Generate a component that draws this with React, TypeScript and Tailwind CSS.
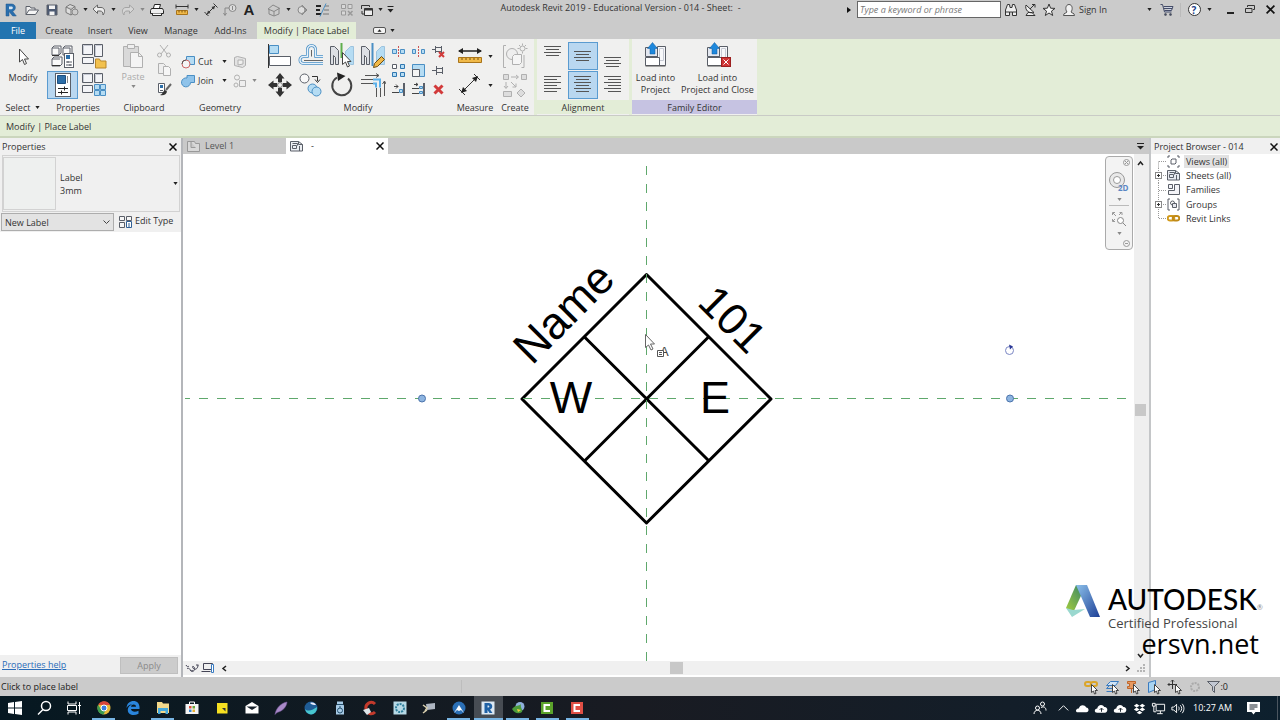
import type { ReactNode } from "react"

const BLUE = "#4a8fc4"
const PALE = "#b5dcf3"
const INK = "#5a5f68"
const FADE = "#b0b0b0"

type IconProps = { w?: number; h?: number; children: ReactNode }

function Icon({ w = 16, h = 16, children }: IconProps) {
  return (
    <svg width={w} height={h} viewBox={`0 0 ${w} ${h}`} fill="none" stroke={INK} strokeWidth="1" className="shrink-0">
      {children}
    </svg>
  )
}

function Caret({ faded = false, small = false }: { faded?: boolean; small?: boolean }) {
  return (
    <svg width={small ? 5 : 7} height={small ? 3 : 4} viewBox="0 0 7 4" className="shrink-0">
      <path d="M0.500 0h6L3.500 4z" fill={faded ? "#888" : "#222"} />
    </svg>
  )
}

function CloseX({ size = 8 }: { size?: number }) {
  return (
    <svg width={size} height={size} viewBox="0 0 8 8" stroke="#111" strokeWidth="1.500">
      <path d="M0.500 0.500l7 7M7.500 0.500l-7 7" />
    </svg>
  )
}

/* ---------- title bar ---------- */

const QUICK: { name: string; width: string; icon: ReactNode }[] = [
  {
    name: "Revit",
    width: "w-[22px]",
    icon: (
      <Icon>
        <path d="M3 2h5.500c5 0 5 6.500 1 7.200l3.800 4.800h-3.600L6 9.500V14H3z" fill="#2a6fae" stroke="#1d568c" strokeWidth="0.500" />
        <path d="M6 4.500h2.500c1.800 0 1.800 2.700 0 2.700H6z" fill="#d5e6f3" stroke="none" />
      </Icon>
    ),
  },
  {
    name: "Open",
    width: "w-5",
    icon: (
      <Icon>
        <path d="M2 12.500V4.500h4l1 1.500h4v2" fill="#eee" />
        <path d="M2 12.500l3-4.500h9.500l-3 4.500z" fill="#f5f5f5" />
      </Icon>
    ),
  },
  {
    name: "Save",
    width: "w-5",
    icon: (
      <Icon>
        <path d="M3 3h10v10H3z" fill="#4d5a72" />
        <path d="M5 3.500h6v3.500H5zM5.500 9.500h5V13h-5z" fill="#f4f4f4" stroke="none" />
      </Icon>
    ),
  },
  {
    name: "Synchronize",
    width: "w-[19px]",
    icon: (
      <Icon>
        <path d="M2 5l4-2.500 5 2v5.500l-4 3-5-2.500zM2 5l5 2.500 4-3M7 7.500V13" fill="#ddd" stroke="#777" />
        <circle cx="11" cy="10" r="3" fill="#ccc" stroke="#888" />
      </Icon>
    ),
  },
  { name: "Synchronize options", width: "w-2", icon: <Caret small /> },
  {
    name: "Undo",
    width: "w-5",
    icon: (
      <Icon>
        <path d="M2 7l4.500-4v2.500h3.500c4 0 4.500 4.500 2 7.500 0-3-1-4-3-4H6.500v2.500z" fill="#eee" stroke="#666" />
      </Icon>
    ),
  },
  { name: "Undo history", width: "w-[9px]", icon: <Caret small /> },
  {
    name: "Redo",
    width: "w-5",
    icon: (
      <Icon>
        <path d="M14 7L9.500 3v2.500H6c-4 0-4.500 4.500-2 7.500 0-3 1-4 3-4h2.500v2.500z" fill="#d6d6d6" stroke="#a4a4a4" />
      </Icon>
    ),
  },
  { name: "Redo history", width: "w-[9px]", icon: <Caret small faded /> },
  {
    name: "Print",
    width: "w-5",
    icon: (
      <Icon>
        <path d="M4.500 6L5.500 2.500h6l-1 3.500" fill="#fff" stroke="#222" />
        <path d="M2.500 6.500h11l1 2v3h-13v-3z" fill="#eee" stroke="#222" />
        <path d="M3.500 11.500v2h9v-2" fill="#fff" stroke="#222" />
      </Icon>
    ),
  },
  {
    name: "Measure",
    width: "w-[25px] pl-[5px]",
    icon: (
      <Icon>
        <path d="M2 4.500h12M2 2.500v4M14 2.500v4" stroke="#333" />
        <path d="M2.500 8.500h11v4h-11z" fill="#f0b948" stroke="#a9741a" />
        <path d="M5 8.500v2M8 8.500v2M11 8.500v2" stroke="#7a5210" />
      </Icon>
    ),
  },
  { name: "Measure options", width: "w-[9px]", icon: <Caret small /> },
  {
    name: "Aligned Dimension",
    width: "w-[19px]",
    icon: (
      <Icon>
        <path d="M3 13L13 3M1.500 10l4 4M10.500 1.500l4 4" stroke="#333" />
        <path d="M4 12l1-3.500L7.500 11zM12 4l-1 3.500L8.500 5z" fill="#333" stroke="none" />
      </Icon>
    ),
  },
  {
    name: "Tag by Category",
    width: "w-[19px]",
    icon: (
      <Icon>
        <circle cx="10.500" cy="6" r="3.500" stroke="#888" fill="#ddd" />
        <path d="M10.500 4v4M7 6H3v7M1.500 11L3 13.500 4.500 11" stroke="#888" />
      </Icon>
    ),
  },
  {
    name: "Text",
    width: "w-5",
    icon: <span className="font-['Liberation_Sans',Arial,sans-serif] text-[15px] leading-none font-bold text-[#222]">A</span>,
  },
  {
    name: "Default 3D View",
    width: "w-[25px] pl-[5px]",
    icon: (
      <Icon>
        <path d="M2 7l5-4 6 3v6l-5 2-5-2V7M2 7l6 2.500L14 6M8 9.500V14" fill="#ccc" stroke="#888" />
      </Icon>
    ),
  },
  { name: "3D View options", width: "w-2", icon: <Caret small /> },
  {
    name: "Section",
    width: "w-5",
    icon: (
      <Icon>
        <path d="M8 3l5 5-5 5z" fill="#999" stroke="#888" />
        <circle cx="7.500" cy="8" r="3.500" fill="#ddd" stroke="#888" />
      </Icon>
    ),
  },
  {
    name: "Thin Lines",
    width: "w-[19px]",
    icon: (
      <Icon>
        <path d="M2 4h5M2 8h4M2 12h5" stroke="#222" strokeWidth="2" />
        <path d="M11 4h4M10 8h5M9 12h6" stroke="#777" />
        <path d="M12 1.500L6 14.500" stroke={BLUE} />
      </Icon>
    ),
  },
  {
    name: "Close Inactive Views",
    width: "w-[26px] pl-[6px]",
    icon: (
      <Icon>
        <path d="M2.500 2.500h4v4h-4zM9 2.500h4v4H9zM2.500 9h4v4h-4z" fill="#d8d8d8" stroke="#999" />
        <path d="M9 9l4.500 4.500M13.500 9L9 13.500" stroke="#999" strokeWidth="1.500" />
      </Icon>
    ),
  },
  {
    name: "Switch Windows",
    width: "w-5",
    icon: (
      <Icon>
        <path d="M2.500 7V3.500h8V5" stroke="#333" />
        <path d="M5.500 6.500h8v7h-8z" fill="#eee" stroke="#333" />
        <path d="M5.500 7.500h8" stroke="#333" strokeWidth="2" />
        <path d="M3 9v3h2" stroke="#333" />
      </Icon>
    ),
  },
  { name: "Window list", width: "w-[6px]", icon: <Caret small /> },
  {
    name: "Customize Quick Access Toolbar",
    width: "w-[15px]",
    icon: (
      <Icon w={7} h={7}>
        <path d="M0.500 0.500h6" stroke="#222" />
        <path d="M0.500 3h6l-3 3.500z" fill="#222" stroke="none" />
      </Icon>
    ),
  },
]

function TitleBar() {
  return (
    <header className="flex h-[22px] items-center bg-[#cbcbcb] pb-[3px]">
      <div className="flex h-full shrink-0 items-center">
        {QUICK.map((q) => (
          <button key={q.name} aria-label={q.name} className={`${q.width} flex h-full items-center justify-center`}>
            {q.icon}
          </button>
        ))}
      </div>
      <h1 className="min-w-0 flex-1 truncate pr-1 pb-[3px] text-center text-[9px] whitespace-pre text-[#333]">
        Autodesk Revit 2019 - Educational Version - 014 - Sheet:  -
      </h1>
      <div className="flex h-full shrink-0 items-center">
        <button aria-label="Collapse search" className="w-[10px]">
          <svg width="4" height="6" viewBox="0 0 4 6">
            <path d="M0 0l4 3-4 3z" fill="#111" />
          </svg>
        </button>
        <input
          aria-label="Search"
          placeholder="Type a keyword or phrase"
          className="h-[17px] w-36 border border-[#666] bg-white px-[2px] text-[9px] italic placeholder:text-[#777]"
        />
        <button aria-label="Find" className="flex w-[19px] justify-center">
          <Icon w={14} h={14}>
            <path d="M1.500 12.500V7l2-5.500h2l.5 3h2l.5-3h2l2 5.500v5.500h-4V9H5.500v3.500zM1.500 9h4M8.500 9h4" fill="#eee" stroke="#333" />
          </Icon>
        </button>
        <button aria-label="Communication Center" className="flex w-[19px] justify-center">
          <Icon w={14} h={14}>
            <path d="M3 2c-1.500 5 3 9 8 7.500zM3 12.500h9l-3-3H5z" fill="#eee" stroke="#333" />
            <path d="M7 6l4-4M9 1.500h3v3" stroke="#333" />
          </Icon>
        </button>
        <button aria-label="Favorites" className="flex w-[19px] justify-center">
          <Icon w={14} h={14}>
            <path d="M7 1l1.600 4.200 4.400.2-3.500 2.700 1.200 4.400L7 10l-3.700 2.500 1.200-4.400L1 5.400l4.400-.2z" fill="#f5f5f5" stroke="#333" />
          </Icon>
        </button>
        <button className="flex w-[86px] items-center gap-[3px] pl-1 text-[9px] text-[#333]">
          <Icon w={14} h={14}>
            <path d="M1.500 12.500c0-3 3-2 3.500-3.500C3 6.500 3.500 1.500 7 1.500s4 5 2 7.500c.5 1.500 3.500.5 3.500 3.500z" fill="#f2f2f2" stroke="#555" />
          </Icon>
          Sign In
        </button>
        <button aria-label="Account menu" className="flex w-[10px] justify-center">
          <Caret small />
        </button>
        <button aria-label="App Store" className="flex w-[27px] justify-center border-r border-[#bbb]">
          <Icon w={14} h={14}>
            <path d="M0.500 1.500h2l2 7.500h7M3.500 3.500h9.500l-1.500 4H4.500M4 5.500h8" fill="#cdd3e2" stroke="#444c68" />
            <circle cx="5.500" cy="11.500" r="1" fill="#444c68" />
            <circle cx="10.500" cy="11.500" r="1" fill="#444c68" />
          </Icon>
        </button>
        <button aria-label="Help" className="flex w-[26px] justify-center">
          <span className="flex size-[13px] items-center justify-center rounded-full border border-[#333] bg-white text-[10px] leading-none font-bold text-[#1d3f8c]">
            ?
          </span>
        </button>
        <button aria-label="Help menu" className="flex w-[10px]">
          <Caret small />
        </button>
        <button aria-label="Minimize" className="ml-[3px] flex w-5 justify-center pt-[7px]">
          <span className="h-[2px] w-[7px] bg-[#222]" />
        </button>
        <button aria-label="Restore" className="flex w-5 justify-center">
          <Icon w={10} h={9}>
            <path d="M2.500 2V0.500h7v4H8" stroke="#333" />
            <path d="M0.500 3.500h6.500v4H0.500z" stroke="#333" />
          </Icon>
        </button>
        <button aria-label="Close" className="flex w-5 justify-center">
          <CloseX size={9} />
        </button>
      </div>
    </header>
  )
}

const TABS = [
  { name: "Create", width: "w-[46px]" },
  { name: "Insert", width: "w-9" },
  { name: "View", width: "w-10" },
  { name: "Manage", width: "w-[46px]" },
  { name: "Add-Ins", width: "w-[53px]" },
]

function RibbonTabs() {
  return (
    <nav className="flex h-[17px] items-center bg-[#cbcbcb] text-[9px] text-[#333]">
      <button className="h-full w-9 bg-[#2274b0] text-white">File</button>
      {TABS.map((t) => (
        <button key={t.name} className={`${t.width} h-full whitespace-nowrap`}>
          {t.name}
        </button>
      ))}
      <button className="h-full w-[99px] bg-[#e3edd7] whitespace-nowrap">Modify | Place Label</button>
      <button aria-label="Ribbon display" className="ml-[17px] flex items-center gap-1">
        <Icon w={13} h={7}>
          <rect x="0.500" y="0.500" width="12" height="6" rx="1.500" fill="#f4f4f4" stroke="#555" />
          <path d="M4.500 4.800h4l-2-2.500z" fill="#222" stroke="none" />
        </Icon>
        <Caret small />
      </button>
    </nav>
  )
}

/* ---------- ribbon ---------- */

type PanelProps = { title: string; width: string; labelClass?: string; children: ReactNode }

function Panel({ title, width, labelClass = "", children }: PanelProps) {
  return (
    <section className={`${width} flex shrink-0 flex-col bg-[#f0f0ef] text-[#333]`}>
      <div className="flex h-[61px] justify-center pt-[3px]">{children}</div>
      <h2 className={`${labelClass} flex h-[14px] items-center justify-center text-[9px] leading-none`}>{title}</h2>
    </section>
  )
}

function Tool({ name, on = false, children }: { name: string; on?: boolean; children: ReactNode }) {
  return (
    <button
      aria-label={name}
      className={`flex h-7 items-center justify-center ${on ? "border border-[#5a9bd0] bg-[#b9d7f0]" : ""}`}
    >
      {children}
    </button>
  )
}

function LinesIcon({ rows, side }: { rows: number[]; side: "left" | "mid" | "right" }) {
  // alternating long and short strokes, as on a paragraph button
  return (
    <Icon w={18} h={22}>
      {rows.map((y, i) => {
        const len = i % 2 ? 13 : 17
        const x = side === "left" ? 0 : side === "right" ? 17 - len : (17 - len) / 2
        return <path key={y} d={`M${x} ${y}.500h${len}`} stroke="#555" />
      })}
    </Icon>
  )
}

function PropertiesPanel() {
  return (
    <Panel title="Properties" width="w-16">
      <div className="grid grid-cols-[31px_31px] content-start gap-y-px">
        <Tool name="Family Category and Parameters">
          <Icon w={26} h={26}>
            <path d="M2 5l2-2h7v7l-2 2H2zM13 5l2-2h7v7l-2 2h-7zM2 16l2-2h8v7l-2 2H2zM2 5h7v7M13 5h7v7M2 16h8" fill="#fafafa" />
            <path d="M2 12.500h7M2 22.500h8" stroke="#333" />
            <rect x="14.500" y="10.500" width="9" height="14" fill="#fff" />
            <path d="M16 12h4v4h-4z" fill="#2c6ea8" stroke="none" />
            <path d="M16 19h6M16 22h6M18 18v2M20 21v2" />
          </Icon>
        </Tool>
        <Tool name="Family Types">
          <Icon w={26} h={26}>
            <path d="M1.500 1.500h10v10h-10zM13.500 1.500h8v12h-8zM1.500 14.500h11v6h-11z" fill="#f3f4f7" />
            <path d="M2.500 11v-8.500h8M14.500 13v-10.500h6" stroke="#c6cad4" />
            <path d="M14.500 16h4l1 2h5.500v7H14.500z" fill="#f2c14e" stroke="#b8862a" />
          </Icon>
        </Tool>
        <Tool name="Properties" on>
          <Icon w={26} h={26}>
            <rect x="5.500" y="1.500" width="15" height="23" fill="#fff" />
            <path d="M7.500 3.500h8v8h-8z" fill="#2c6ea8" stroke="#1d4f80" />
            <path d="M17.500 4v7" stroke="#888" />
            <path d="M8 16.500h10M8 20.500h10M14.500 14.500v4M11.500 18.500v4" stroke="#222" />
          </Icon>
        </Tool>
        <Tool name="Type Properties">
          <Icon w={26} h={26}>
            <path d="M1.500 1.500h10v9h-10zM13.500 1.500h8v9h-8zM1.500 13.500h10v7h-10z" fill="#f3f4f7" />
            <path d="M2.500 10v-7.500h8M14.500 10v-7.500h6" stroke="#c6cad4" />
            <path d="M13.500 12.500h5v5h-5zM19.500 12.500h5v5h-5zM13.500 18.500h5v5h-5zM19.500 18.500h5v5h-5z" fill={PALE} stroke={BLUE} />
          </Icon>
        </Tool>
      </div>
    </Panel>
  )
}

function ClipboardPanel() {
  return (
    <Panel title="Clipboard" width="w-[68px]">
      <button disabled className="flex w-[46px] flex-col items-center gap-[2px] pt-px text-[9px] leading-3 text-[#aaa]">
        <Icon w={22} h={26}>
          <path d="M1.500 3.500h15v20h-15z" fill="#d9d9d9" stroke={FADE} />
          <path d="M5.500 1.500h7v4h-7z" fill="#eee" stroke={FADE} />
          <path d="M8.500 9.500h8l4 4v11h-12zM16.500 9.500v4h4" fill="#f4f4f4" stroke={FADE} />
        </Icon>
        Paste
        <Caret small faded />
      </button>
      <div className="flex flex-col gap-[3px] pt-px pr-[6px]">
        <button aria-label="Cut to Clipboard" disabled>
          <Icon>
            <path d="M4 2l7 9M12 2L5 11" stroke={FADE} />
            <circle cx="3.500" cy="12" r="2" stroke={FADE} />
            <circle cx="12.500" cy="12" r="2" stroke={FADE} />
          </Icon>
        </button>
        <button aria-label="Copy to Clipboard" disabled>
          <Icon>
            <path d="M2.500 1.500h5l2 2v8h-7z" fill="#eee" stroke={FADE} />
            <path d="M7.500 4.500h5l2 2v7h-7z" fill="#f6f6f6" stroke={FADE} />
          </Icon>
        </button>
        <button aria-label="Match Type Properties">
          <Icon>
            <path d="M2.500 2.500h6v9h-6z" fill="#fff" />
            <path d="M4 4h3v3H4z" fill="#2c6ea8" stroke="none" />
            <path d="M4 9.500h3" />
            <path d="M15 3l-5 6" stroke="#666" strokeWidth="2" />
            <path d="M9 9c-2 1-2 4-5 5 4 1 6.500-1 7-3.500z" fill="#333" stroke="none" />
          </Icon>
        </button>
      </div>
    </Panel>
  )
}

function GeometryPanel() {
  return (
    <Panel title="Geometry" width="w-[84px]">
      <div className="flex w-full flex-col pt-[10px] pl-[3px] text-[9px]">
        <div className="flex h-[19px] items-center">
          <button className="flex w-[52px] items-center gap-[3px]">
            <Icon w={14} h={14}>
              <path d="M5.500 1.500h8v8h-8z" fill={PALE} stroke={BLUE} />
              <circle cx="5" cy="9" r="4" fill="#f4f4f4" stroke="#c66" />
              <path d="M5 5a4 4 0 0 0-4 4" stroke="#555" />
            </Icon>
            <span className="w-[21px] text-left">Cut</span>
            <Caret small />
          </button>
          <button aria-label="Cope" disabled>
            <Icon w={14} h={14}>
              <path d="M1.500 2.500l3-1 8 2v7l-3 2-8-2zM5 5v5l5-1V5z" fill="#e3e3e3" stroke={FADE} />
            </Icon>
          </button>
        </div>
        <div className="flex h-[19px] items-center">
          <button className="flex w-[52px] items-center gap-[3px]">
            <Icon w={14} h={14}>
              <path d="M6 1.500h7.500v7H9.500a4.500 4.500 0 1 1-3.500-4.500z" fill="#8fc3ea" stroke={BLUE} />
            </Icon>
            <span className="w-[21px] text-left">Join</span>
            <Caret small />
          </button>
          <button aria-label="Split Face" disabled className="flex items-center gap-[5px]">
            <Icon w={14} h={14}>
              <circle cx="4" cy="3.500" r="2.500" stroke={FADE} />
              <path d="M6.500 6.500h6v6h-6z" fill="#eee" stroke={FADE} />
              <circle cx="3" cy="11" r="2" stroke={FADE} />
            </Icon>
            <Caret small faded />
          </button>
        </div>
      </div>
    </Panel>
  )
}

const MODIFY_BIG: { name: string; icon: ReactNode }[] = [
  {
    name: "Align",
    icon: (
      <>
        <path d="M1.500 1v24" stroke="#333" />
        <path d="M2.500 2.500h9v8h-9z" fill={PALE} stroke={BLUE} />
        <path d="M2.500 13.500h21v9h-21z" fill="#fff" />
      </>
    ),
  },
  {
    name: "Offset",
    icon: (
      <>
        <path d="M1 21.500v-5h6.500v-2C2 8 7 1.500 13 1.500S23 8 18.500 13H25" stroke={BLUE} strokeWidth="0" />
        <path
          d="M25 20.500H5.500a3 3 0 0 1 0-7H9.500V6.500a4 4 0 0 1 8 0v7H25"
          stroke={BLUE}
          strokeWidth="3"
          strokeLinejoin="round"
        />
        <path
          d="M25 20.500H5.500a3 3 0 0 1 0-7H9.500V6.500a4 4 0 0 1 8 0v7H25"
          stroke="#e6f1fa"
          strokeWidth="1.500"
          strokeLinejoin="round"
        />
        <path d="M25 17.500H6M13.500 7v6.500" stroke="#666" />
      </>
    ),
  },
  {
    name: "Mirror - Pick Axis",
    icon: (
      <>
        <path d="M1.500 3.500h4l4 4v14h-3v-7l-2-2v9h-3z" fill="#dcdfe4" />
        <path d="M24.500 3.500h-3l-5 5v7l5 6h3z" fill={PALE} stroke="#9cc3de" />
        <path d="M12.500 0v15" stroke="#5fae4c" strokeWidth="2" />
        <path d="M13.500 9.500v12l3-2.500 2 5 2-1-2-4.500h3.500z" fill="#fff" stroke="#444" />
      </>
    ),
  },
  {
    name: "Mirror - Draw Axis",
    icon: (
      <>
        <path d="M1.500 3.500h4l4 4v14h-3v-7l-2-2v9h-3z" fill="#dcdfe4" />
        <path d="M24.500 3.500h-3l-5 5v13h8z" fill={PALE} stroke="#9cc3de" />
        <path d="M12.500 0v23" stroke={BLUE} strokeWidth="2" />
        <path d="M13.500 24.500l1-4 7-7 3 3-7 7z" fill="#f0b848" stroke="#6b4c12" />
      </>
    ),
  },
  {
    name: "Move",
    icon: (
      <>
        <path
          d="M13 1l4.500 5.500H15V10h-4V6.500H8.500zM13 25l4.500-5.500H15V16h-4v3.500H8.500zM1 13l5.500-4.500V11H10v4H6.500v2.500zM25 13l-5.500-4.500V11H16v4h3.500v2.500z"
          fill="#333"
          stroke="none"
        />
        <circle cx="13" cy="13" r="2.500" stroke="#777" />
      </>
    ),
  },
  {
    name: "Copy",
    icon: (
      <>
        <circle cx="6.500" cy="6.500" r="4.500" fill="#f8f8f8" />
        <circle cx="14.500" cy="16.500" r="4.500" fill={PALE} stroke={BLUE} />
        <circle cx="18.500" cy="19.500" r="4.500" fill={PALE} stroke={BLUE} />
        <path d="M14 4.500h5.500V9M17 7.500l2.500 3L22 7.500" stroke="#333" />
      </>
    ),
  },
  {
    name: "Rotate",
    icon: (
      <>
        <path d="M8 5.500a9.500 9.500 0 1 0 11 1" stroke="#444" strokeWidth="2" />
        <path d="M8 0.500l8.500 3.500L9 9z" fill="#222" stroke="none" />
      </>
    ),
  },
  {
    name: "Trim/Extend to Corner",
    icon: (
      <>
        <path d="M1 7.500h12M1 11.500h12M5 3.500h14M16 1.500l3 2-3 2" stroke="#555" />
        <path d="M13 7.500h7v8M13 11.500h3v4" stroke="#5ab0ea" strokeWidth="2" />
        <path d="M16.500 16v9M20.500 16v9M24.500 24V9M22.500 12l2-3 1.500 3" stroke="#555" />
      </>
    ),
  },
]

const MODIFY_SMALL: { name: string; icon: ReactNode }[] = [
  {
    name: "Split Element",
    icon: (
      <>
        <path d="M1.500 5.500h4v4h-4zM9.500 5.500h4v4h-4z" fill={PALE} stroke={BLUE} />
        <path d="M7.500 2v11" stroke="#c55" strokeDasharray="2 1" />
      </>
    ),
  },
  {
    name: "Split with Gap",
    icon: (
      <>
        <path d="M1.500 5.500h3v4h-3zM10.500 5.500h3v4h-3z" fill={PALE} stroke={BLUE} />
        <path d="M7.500 2v11" stroke="#c55" strokeDasharray="2 1" />
      </>
    ),
  },
  {
    name: "Unpin",
    icon: (
      <>
        <path d="M1 5.500h3M4.500 2v7M4.500 3.500h6v4h-6M10.500 2v7" />
        <path d="M8 8l5 5M13 8l-5 5" stroke="#d23a3a" strokeWidth="2" />
      </>
    ),
  },
  {
    name: "Array",
    icon: (
      <>
        <path d="M1.500 1.500h4v4h-4z" fill="#fff" />
        <path d="M9.500 1.500h4v4h-4zM1.500 9.500h4v4h-4zM9.500 9.500h4v4h-4z" fill={PALE} stroke="#2f76b0" />
      </>
    ),
  },
  {
    name: "Scale",
    icon: (
      <>
        <path d="M1.500 1.500h12v12h-12z" fill={PALE} stroke={BLUE} />
        <path d="M1.500 6.500h7v7h-7z" fill="#f4f4f4" />
      </>
    ),
  },
  { name: "Pin", icon: <path d="M1 7.500h4M5.500 3v9M5.500 5.500h6v4h-6M11.500 4v7" /> },
  {
    name: "Trim/Extend Single Element",
    icon: (
      <>
        <path d="M1 10.500h7M3 4.500h4M5 2.500l2 2-2 2" stroke="#444" />
        <path d="M8.500 7.500h3v3h-3z" fill={PALE} stroke={BLUE} />
        <path d="M13 1v13" strokeWidth="2" />
      </>
    ),
  },
  {
    name: "Trim/Extend Multiple Elements",
    icon: (
      <>
        <path d="M1 6.500h7M1 11.500h7M3 2.500h4M5 1l2 1.500L5 4" stroke="#444" />
        <path d="M8.500 4.500h3v2h-3zM8.500 9.500h3v2h-3z" fill={PALE} stroke={BLUE} />
        <path d="M13 1v13" strokeWidth="2" />
      </>
    ),
  },
  { name: "Delete", icon: <path d="M3.500 3.500l8 8M11.500 3.500l-8 8" stroke="#d23a3a" strokeWidth="3" /> },
]

function ModifyPanel() {
  return (
    <Panel title="Modify" width="w-48">
      <div className="grid grid-cols-[31px_31px_31px_31px] content-start gap-y-px">
        {MODIFY_BIG.map((t) => (
          <Tool key={t.name} name={t.name}>
            <Icon w={26} h={26}>
              {t.icon}
            </Icon>
          </Tool>
        ))}
      </div>
      <div className="grid grid-cols-[20px_20px_20px] content-start pr-[3px]">
        {MODIFY_SMALL.map((t) => (
          <button key={t.name} aria-label={t.name} className="flex h-[19px] items-center justify-center">
            <Icon w={15} h={15}>
              {t.icon}
            </Icon>
          </button>
        ))}
      </div>
    </Panel>
  )
}

function MeasureCreatePanels() {
  return (
    <>
      <Panel title="Measure" width="w-[42px]">
        <div className="flex flex-col gap-px">
          <button aria-label="Measure" className="flex h-7 items-center gap-[5px]">
            <Icon w={26} h={20}>
              <path d="M2 5h22" stroke="#222" strokeWidth="1.500" />
              <path d="M1 5l5-3v6zM25 5l-5-3v6z" fill="#222" stroke="none" />
              <path d="M1.500 11.500h23v5h-23z" fill="#f0b948" stroke="#a9741a" />
              <path d="M5 12v2M9 12v2M13 12v2M17 12v2M21 12v2" stroke="#7a5210" />
            </Icon>
            <Caret small />
          </button>
          <button aria-label="Dimension" className="flex h-7 items-center gap-[5px]">
            <Icon w={26} h={26}>
              <path d="M5 20L20 5M2 17l6 6M17 2l6 6" stroke="#333" />
              <path d="M4 21l2-6 4 4zM21 4l-2 6-4-4z" fill="#222" stroke="none" />
            </Icon>
            <Caret small />
          </button>
        </div>
      </Panel>
      <Panel title="Create" width="w-[38px]">
        <div className="flex flex-col gap-px">
          <button aria-label="Create Group" disabled className="flex h-7 items-center">
            <Icon w={26} h={26}>
              <path d="M4 2.500H1.500v22H4M22 12v12.500h-2.500" stroke={FADE} />
              <circle cx="10" cy="11" r="5.500" fill="#eee" stroke={FADE} />
              <path d="M10.500 13.500l2-2h7v8l-2 2h-7z" fill="#f5f5f5" stroke={FADE} />
              <circle cx="20.500" cy="5.500" r="2.500" stroke={FADE} />
              <path d="M20.500 0.500v2M20.500 8.500v2M15.500 5.500h2M23.500 5.500h2M17 2l1.500 1.500M24 2l-1.500 1.500" stroke={FADE} />
            </Icon>
          </button>
          <button aria-label="Create Similar" disabled className="flex h-7 items-center">
            <Icon w={26} h={26}>
              <path d="M1.500 2.500h5v5h-5zM19.500 2.500h5v5h-5zM1.500 19.500h8v5h-8zM19 17l4 4-4 4-4-4z" fill="#ddd" stroke={FADE} />
              <path d="M9 5h7M14 3l2.500 2L14 7M4 10v6M2 14l2 2.500L6 14M9 10l5 5M14 11.500V15h-3.500" stroke={FADE} />
            </Icon>
          </button>
        </div>
      </Panel>
    </>
  )
}

function AlignmentPanel() {
  return (
    <Panel title="Alignment" width="w-[92px]" labelClass="bg-[#e3edd7]">
      <div className="grid w-[90px] grid-cols-3 content-start gap-y-px">
        <Tool name="Top">
          <LinesIcon rows={[1, 4, 7, 10]} side="mid" />
        </Tool>
        <Tool name="Middle" on>
          <LinesIcon rows={[6, 9, 12, 15]} side="mid" />
        </Tool>
        <Tool name="Bottom">
          <LinesIcon rows={[12, 15, 18, 21]} side="mid" />
        </Tool>
        <Tool name="Left">
          <LinesIcon rows={[2, 5, 8, 11, 14, 17]} side="left" />
        </Tool>
        <Tool name="Center" on>
          <LinesIcon rows={[2, 5, 8, 11, 14, 17]} side="mid" />
        </Tool>
        <Tool name="Right">
          <LinesIcon rows={[2, 5, 8, 11, 14, 17]} side="right" />
        </Tool>
      </div>
    </Panel>
  )
}

function LoadIcon({ close = false }: { close?: boolean }) {
  return (
    <Icon w={26} h={26}>
      <path d="M14.500 4.500h8v19h-8z" fill="#f7f8fa" />
      <path d="M16.500 6.500h4v12h-4z" stroke="#c6cad4" />
      <path d="M2.500 5.500h12v9h-12z" fill="#e4e8f0" />
      <path d="M2.500 15.500h14v8h-14z" fill="#fff" />
      <path d="M2.500 24h20" stroke="#555" />
      <path d="M9.500 0.500l5 6H12V12H7V6.500H4.500z" fill="#1e88dc" stroke="#0f5a9c" strokeWidth="0.500" />
      {close && (
        <>
          <rect x="16.500" y="15.500" width="9" height="9" fill="#cf3434" stroke="#9c1f1f" />
          <path d="M18.500 17.500l5 5M23.500 17.500l-5 5" stroke="#fff" />
        </>
      )}
    </Icon>
  )
}

function Ribbon() {
  return (
    <div className="flex h-[77px] border-b border-[#c9cbc6] bg-[#e3edd7]">
      <section className="flex w-[46px] shrink-0 flex-col bg-[#f0f0ef] text-[9px] text-[#333]">
        <button className="flex h-[61px] flex-col items-center gap-[5px] pt-2 leading-3">
          <Icon w={18} h={20}>
            <path d="M5.500 2v13l3-2.500 2 5 2-1-2-4.500h4z" fill="#fff" stroke="#444" />
          </Icon>
          Modify
        </button>
        <button className="flex h-[14px] items-center justify-center gap-[5px] leading-none">
          Select <Caret small />
        </button>
      </section>
      <PropertiesPanel />
      <ClipboardPanel />
      <GeometryPanel />
      <ModifyPanel />
      <MeasureCreatePanels />
      <div className="ml-[3px] flex gap-[3px]">
        <AlignmentPanel />
        <Panel title="Family Editor" width="w-[125px]" labelClass="bg-[#c6c3e2]">
          <button className="flex w-[46px] flex-col items-center text-[9px] leading-3">
            <LoadIcon />
            <span className="pt-1 whitespace-nowrap">Load into</span>
            <span>Project</span>
          </button>
          <button className="flex w-[78px] flex-col items-center text-[9px] leading-3">
            <LoadIcon close />
            <span className="pt-1">Load into</span>
            <span className="whitespace-nowrap">Project and Close</span>
          </button>
        </Panel>
      </div>
    </div>
  )
}

/* ---------- side panels ---------- */

function PropertiesPalette() {
  return (
    <aside className="flex w-[183px] shrink-0 flex-col border-r-2 border-[#b4b6ba] bg-[#f0f0f0] text-[9px] text-[#333]">
      <div className="flex h-[17px] items-center justify-between pt-px pr-1 pl-[2px]">
        <h2>Properties</h2>
        <button aria-label="Close Properties">
          <CloseX />
        </button>
      </div>
      <button className="mr-px ml-[2px] flex h-[57px] items-center border border-[#d2d2d2] text-left leading-[13px]">
        <span className="h-[53px] w-[53px] border border-[#d2d2d2] bg-[#eef0ef]" />
        <span className="flex-1 pl-1">
          Label
          <br />
          3mm
        </span>
        <span className="pr-px">
          <Caret small />
        </span>
      </button>
      <div className="flex h-5 items-center">
        <div className="relative ml-px w-[113px]">
          <select
            aria-label="Element filter"
            className="h-[18px] w-full appearance-none border border-[#adadad] bg-[#e3e3e3] pl-[3px] text-[9px] leading-none text-[#333]"
          >
            <option>New Label</option>
          </select>
          <svg width="7" height="5" viewBox="0 0 7 5" fill="none" stroke="#444" className="pointer-events-none absolute top-[7px] right-1">
            <path d="M0.500 0.500l3 3 3-3" />
          </svg>
        </div>
        <button className="flex flex-1 items-center gap-[3px] pb-[2px] pl-[5px] whitespace-nowrap">
          <Icon w={13} h={13}>
            <path d="M0.500 1.500h5v4h-5zM7.500 1.500h5v4h-5zM0.500 7.500h5v5h-5z" fill="#f6f6f6" />
            <path d="M7.500 6.500h5v6h-5z" fill="#fff" stroke="#2f5f95" />
            <path d="M9 9h2M9 11h2" stroke="#2f5f95" />
          </Icon>
          Edit Type
        </button>
      </div>
      <div className="flex-1 bg-white" />
      <div className="flex h-[22px] items-center justify-between pr-[3px] pb-[2px] pl-[2px]">
        <a href="#help" className="text-[#2b6cb8] underline">
          Properties help
        </a>
        <button disabled className="h-[17px] w-[58px] border border-[#bfbfbf] bg-[#cccccc] leading-none text-[#8a8a8a]">
          Apply
        </button>
      </div>
    </aside>
  )
}

const TREE: { name: string; expandable: boolean; icon: ReactNode }[] = [
  {
    name: "Views (all)",
    expandable: false,
    icon: (
      <>
        <path d="M3 1H1v2M10 1h2v2M3 12H1v-2M10 12h2v-2" />
        <path d="M4 5l1-1h4v4L8 9H4z" fill="#fff" />
      </>
    ),
  },
  {
    name: "Sheets (all)",
    expandable: true,
    icon: (
      <>
        <path d="M0.500 1.500h8l4 3v6.500H0.500z" fill="#e8eaf0" />
        <path d="M2.500 5.500h4v3h-4zM2.500 3.500h5v2M9.500 6v5M8.500 1.500v3h4" />
      </>
    ),
  },
  {
    name: "Families",
    expandable: false,
    icon: <path d="M1.500 1.500h4v4h-4zM7.500 1.500h5v10h-11v-4h6z" fill="#f4f4f8" />,
  },
  {
    name: "Groups",
    expandable: true,
    icon: (
      <>
        <path d="M3 1H1v11h2M10 1h2v11h-2" />
        <circle cx="5.500" cy="5" r="2" />
        <path d="M5.500 5.500h4v4h-4z" fill="#e4e6ee" />
      </>
    ),
  },
  {
    name: "Revit Links",
    expandable: false,
    icon: (
      <>
        <rect x="0.750" y="4" width="6.500" height="4.500" rx="2.200" stroke="#d29a1b" strokeWidth="2" />
        <rect x="5.750" y="4" width="6.500" height="4.500" rx="2.200" stroke="#c08a18" strokeWidth="2" />
      </>
    ),
  },
]

function ProjectBrowser() {
  return (
    <aside className="flex w-[131px] shrink-0 flex-col border-l-2 border-[#c4c6c8] bg-white text-[9px] text-[#333]">
      <div className="flex h-4 items-center justify-between bg-[#f0f0f0] pt-px pr-[2px] pl-[3px]">
        <h2 className="whitespace-nowrap">Project Browser - 014</h2>
        <button aria-label="Close Project Browser">
          <CloseX />
        </button>
      </div>
      <ul className="grid h-[72px] grid-rows-5 pl-1">
        {TREE.map((row, i) => (
          <li key={row.name} className="flex items-center">
            <svg width="12" height="15" viewBox="0 0 12 15" fill="none" stroke="#999" className="shrink-0">
              <path d={i === 0 ? "M3.500 7.500V15" : i === 4 ? "M3.500 0V7.500" : "M3.500 0V15"} strokeDasharray="1 1" />
              <path d="M4 7.500h8" strokeDasharray="1 1" />
              {row.expandable && (
                <>
                  <rect x="0.500" y="4.500" width="6" height="6" fill="#fff" stroke="#888" />
                  <path d="M2 7.500h3M3.500 6v3" stroke="#333" />
                </>
              )}
            </svg>
            <Icon w={13} h={13}>
              {row.icon}
            </Icon>
            <button className={`ml-1 h-[13px] px-[2px] leading-none whitespace-nowrap ${i === 0 ? "bg-[#e2e2e2]" : ""}`}>
              {row.name}
            </button>
          </li>
        ))}
      </ul>
    </aside>
  )
}

/* ---------- drawing area ---------- */

function ViewTabs() {
  return (
    <div className="flex h-4 items-center bg-[#c9c9c9] text-[9px] text-[#555]">
      <button className="flex h-full w-[102px] items-center gap-[5px] pl-1">
        <Icon w={13} h={13}>
          <path d="M0.500 1.500h7l1 2h4v8H0.500zM4 1.500v6h4.500" stroke="#999" fill="#d8d8d8" />
        </Icon>
        Level 1
      </button>
      <div className="ml-px flex h-full w-[102px] items-center bg-white pr-1 pl-1 text-[#333]">
        <button className="flex flex-1 items-center gap-2">
          <Icon w={13} h={13}>
            <path d="M0.500 1.500h8l4 3v6.500H0.500z" fill="#eceef2" />
            <path d="M2.500 5.500h4v3h-4zM2.500 3.500h5v2M9.500 6v5M8.500 1.500v3h4" />
          </Icon>
          -
        </button>
        <button aria-label="Close view">
          <CloseX />
        </button>
      </div>
      <button aria-label="View list" className="mr-[5px] ml-auto">
        <Icon w={7} h={7}>
          <path d="M0 0.500h7" stroke="#222" />
          <path d="M0 3h7L3.500 6.500z" fill="#222" stroke="none" />
        </Icon>
      </button>
    </div>
  )
}

function Sheet() {
  return (
    <svg
      viewBox="183 154 951 507"
      className="h-full w-full font-['Liberation_Sans',Arial,sans-serif]"
      role="img"
      aria-label="Room label family"
      fill="none"
    >
      <g stroke="#000" strokeWidth="3" strokeLinejoin="round">
        <path d="M646.500 274.500L771 399 646.500 523 522 399z" />
        <path d="M584.500 337L709 461M708.500 337L584.500 461" />
      </g>
      <g stroke="#5fa86c" strokeWidth="1">
        <path d="M185 398.500H1133" strokeDasharray="9 9" strokeDashoffset="4" />
        <path d="M646.500 164V661" strokeDasharray="9 9" strokeDashoffset="-2" />
      </g>
      <g fill="#000" fontSize="45">
        <text transform="translate(532 366) rotate(-45)">Name</text>
        <text transform="translate(696 304) rotate(45)" fontSize="44">
          101
        </text>
        <text x="571" y="413" textAnchor="middle">
          W
        </text>
        <text x="700" y="413">
          E
        </text>
      </g>
      <g fill="#8db4e0" stroke="#4c74ac">
        <circle cx="422" cy="398.500" r="3.500" />
        <circle cx="1010" cy="398.500" r="3.500" />
      </g>
      <circle cx="1009.500" cy="350.500" r="4" stroke="#7a86c4" />
      <path d="M1009 344.500l4 2-3 3z" fill="#2a3796" />

      {/* pointer with the label badge */}
      <path d="M645.500 334.500v13l3-2.500 2.500 5 2-1-2.500-5h4z" fill="#fff" stroke="#666" />
      <text x="660" y="356" fontSize="13" fill="#444">
        A
      </text>
      <path d="M657.500 350.500h6v6h-6z" fill="#fff" stroke="#555" />
      <path d="M659 352.500h3M659 354.500h3" stroke="#555" />
    </svg>
  )
}

function NavigationBar() {
  return (
    <div className="absolute top-[2px] right-[1px] flex h-[94px] w-7 flex-col items-center justify-between rounded-[4px] border border-[#aaa] bg-[#f3f3f3] py-[2px]">
      <button aria-label="Close navigation bar" className="self-end pr-[2px]">
        <Icon w={7} h={7}>
          <circle cx="3.500" cy="3.500" r="3" stroke="#999" />
          <path d="M2 2l3 3M5 2L2 5" stroke="#999" />
        </Icon>
      </button>
      <button aria-label="2D steering wheel">
        <Icon w={22} h={22}>
          <circle cx="9" cy="9" r="7.500" fill="#e9e9e9" stroke="#999" />
          <circle cx="9" cy="9" r="3.500" fill="#fff" stroke="#999" />
          <text x="10" y="20" fontSize="8" fontWeight="700" fill="#5a86c4" stroke="none">
            2D
          </text>
        </Icon>
      </button>
      <Caret small faded />
      <span className="h-px w-5 bg-[#bbb]" />
      <button aria-label="Zoom region">
        <Icon w={16} h={16}>
          <path d="M2 2l3 3M10 2L8 4M2 10l2-2M1.500 4V1.500H4M8.500 1.500H11V4M1.500 8v2.500H4" stroke="#999" />
          <circle cx="9.500" cy="9.500" r="3" stroke="#888" fill="#fff" />
          <path d="M12 12l3 3" stroke="#888" />
        </Icon>
      </button>
      <Caret small faded />
      <button aria-label="Navigation bar options" className="self-end pr-[2px]">
        <Icon w={7} h={7}>
          <circle cx="3.500" cy="3.500" r="3" stroke="#999" />
          <path d="M2 3.500h3" stroke="#999" />
        </Icon>
      </button>
    </div>
  )
}

function Chevron({ d, label }: { d: string; label: string }) {
  return (
    <button aria-label={label} className="flex justify-center">
      <svg width="7" height="7" viewBox="0 0 7 7" fill="none" stroke="#222" strokeWidth="1.500">
        <path d={d} />
      </svg>
    </button>
  )
}

function DrawingArea() {
  return (
    <main className="flex min-w-0 flex-1 flex-col bg-white">
      <ViewTabs />
      <div className="flex min-h-0 flex-1">
        <div className="relative min-w-0 flex-1">
          <Sheet />
          <NavigationBar />
        </div>
        <div className="flex w-[15px] shrink-0 flex-col bg-[#efefef] pt-[6px] pr-[2px] pb-[2px]">
          <Chevron label="Scroll up" d="M1 5l2.500-3L6 5" />
          <div className="flex flex-1 flex-col items-center justify-center">
            <span className="h-3 w-[11px] bg-[#c8c8c8]" />
          </div>
          <Chevron label="Scroll down" d="M1 2l2.500 3L6 2" />
        </div>
      </div>
      <div className="flex h-[14px] shrink-0 items-center bg-[#f0f0f0] pl-[2px]">
        <button aria-label="Reveal hidden elements" className="w-4">
          <Icon w={14} h={12}>
            <path d="M1 3c1 2 2 2 3 1M2 7c2-3 4 4 6 1M5 8c3 4 6-1 4-3s-2 1 0 2 4-1 4-4M11 3h2.500" stroke="#445" />
          </Icon>
        </button>
        <button aria-label="Reveal constraints">
          <Icon w={14} h={12}>
            <path d="M2.500 1.500h9v6h-9zM0.500 9.500h9" stroke="#445" fill="#eee" />
            <path d="M10.500 2.500h2v8h-2z" stroke="#3a7bc0" fill="#fff" />
          </Icon>
        </button>
        <div className="ml-[6px] flex flex-1 items-center">
          <Chevron label="Scroll left" d="M5 1L2 3.500 5 6" />
          <div className="flex flex-1 justify-center">
            <span className="h-3 w-[13px] bg-[#c8c8c8]" />
          </div>
          <Chevron label="Scroll right" d="M2 1l3 2.500L2 6" />
        </div>
        <svg width="16" height="10" viewBox="0 0 16 10" fill="#b5b5b5" className="mr-[2px]">
          <path d="M12 1h2v2h-2zM12 4h2v2h-2zM12 7h2v2h-2zM9 4h2v2H9zM9 7h2v2H9zM6 7h2v2H6z" />
        </svg>
      </div>
      <div className="h-[2px] bg-white" />
    </main>
  )
}

function Watermark() {
  return (
    <div className="pointer-events-none absolute right-4 bottom-[63px] flex items-end gap-[7px] text-black">
      <svg width="35" height="34" viewBox="0 0 35 34" className="mb-[39px] shrink-0">
        <defs>
          <linearGradient id="leaf" x1="0" y1="1" x2="1" y2="0">
            <stop offset="0" stopColor="#a6cf3c" />
            <stop offset="1" stopColor="#2f7f6a" />
          </linearGradient>
          <linearGradient id="sky" x1="0" y1="0" x2="1" y2="1">
            <stop offset="0" stopColor="#8cc0ea" />
            <stop offset="1" stopColor="#1d3f96" />
          </linearGradient>
        </defs>
        <path d="M10 1h10L7 29 0 24z" fill="url(#leaf)" />
        <path d="M10 1h11l13 32H24z" fill="url(#sky)" />
        <path d="M0 24l7 2 12-1-13 8z" fill="#9ad8cf" />
      </svg>
      <div className="w-[156px] text-left whitespace-nowrap">
        <p className="font-['Lato',sans-serif] text-[28px] leading-[18px] font-medium">
          AUTODESK<span className="text-[7px] font-normal text-[#888]">®</span>
        </p>
        <p className="text-[13px] leading-[15px] text-[#444]">Certified Professional</p>
        <p className="pr-[5px] text-right text-[27px] leading-[26px]">ersvn.net</p>
      </div>
    </div>
  )
}

/* ---------- status bar and taskbar ---------- */

const POINTER = <path d="M8.500 5.500v8l2-1.500 1 3 1.500-.5-1-3h2.500z" fill="#fff" stroke="#444" />

const STATUS: { name: string; icon: ReactNode }[] = [
  {
    name: "Select links",
    icon: (
      <>
        <rect x="2" y="3" width="6" height="4" rx="2" stroke="#dba528" strokeWidth="2" />
        <rect x="8" y="3" width="6" height="4" rx="2" stroke="#dba528" strokeWidth="2" />
      </>
    ),
  },
  {
    name: "Select underlay elements",
    icon: <path d="M2.500 6.500l4-4h8l-3 4zM2.500 9.500l3-3M2.500 9.500h7M2.500 12.500h7" stroke="#3a7bc0" fill="#cfe3f5" />,
  },
  { name: "Select pinned elements", icon: <path d="M2.500 2.500h8v2h-2v3h2v2h-8v-2h2v-3h-2zM6.500 9.500V14" stroke="#c0662a" fill="#e79a62" /> },
  { name: "Select elements by face", icon: <path d="M2.500 3.500l7-2v9l-7 3z" stroke="#3a7bc0" fill="#a9d4f2" /> },
  { name: "Drag elements on selection", icon: <path d="M5.500 1v9M1 5.500h9M4 2.500l1.500-1.500L7 2.500M2.500 4L1 5.500 2.500 7" stroke="#333" /> },
]

function StatusBar() {
  return (
    <footer className="flex h-[19px] shrink-0 items-center bg-[#cbcbcb] text-[9px] text-[#222]">
      <p className="w-[462px] border-r border-[#bdbdbd] pl-px">Click to place label</p>
      <div className="mr-[52px] ml-auto flex items-center">
        {STATUS.map((s) => (
          <button key={s.name} aria-label={s.name} className="flex w-[21px] justify-center">
            <Icon>
              {s.icon}
              {POINTER}
            </Icon>
          </button>
        ))}
        <button aria-label="Background processes" className="flex w-[19px] justify-center">
          <Icon w={12} h={12}>
            <circle cx="6" cy="6" r="4" stroke="#aaa" strokeWidth="2" strokeDasharray="2 1" />
          </Icon>
        </button>
        <button className="flex items-center pl-[3px]">
          <Icon w={13} h={13}>
            <path d="M0.500 1.500h12l-5 5v6l-2-2v-4z" fill="#c2c8d4" />
          </Icon>
          :0
        </button>
      </div>
    </footer>
  )
}

const APPS: { name: string; running?: boolean; active?: boolean; icon: ReactNode }[] = [
  { name: "Start", icon: <path d="M1 3l6-1v5.500H1zM8 2l7-1v6.500H8zM1 8.500h6V14l-6-1zM8 8.500h7V15l-7-1z" fill="#fff" /> },
  {
    name: "Search",
    icon: (
      <>
        <circle cx="10" cy="6" r="4.500" stroke="#fff" strokeWidth="1.500" />
        <path d="M7 9.500L2 14.500" stroke="#fff" strokeWidth="1.500" />
      </>
    ),
  },
  { name: "Task View", icon: <path d="M2 1.500v2.500h8V1.500M2 14.500V12h8v2.500M1.500 5.500h9v5h-9zM13.500 2v12M12 5.500h3" stroke="#fff" /> },
  {
    name: "Chrome",
    running: true,
    icon: (
      <>
        <circle cx="8" cy="8" r="6.500" fill="#e8b93a" />
        <path d="M2.200 4.800A6.500 6.500 0 0 1 14 5H8z" fill="#d8443a" />
        <path d="M2.200 4.800A6.500 6.500 0 0 0 7.500 14.500L10 9.500 5 9.500z" fill="#3c9b50" />
        <circle cx="8" cy="8" r="3" fill="#3b7de0" stroke="#fff" />
      </>
    ),
  },
  {
    name: "Edge",
    icon: <path d="M1.500 8C2 3 5 1 8.500 1c4 0 6.500 3 6 8H6c.5 3 4 3.500 7.500 1.800v3C8 16.500 2.500 14.500 2.800 9.500 3 7 5 5 7 4.500 5 4 3 5.500 1.500 8zM6 6.800h5c0-3-4.500-3-5 0z" fill="#2a86dd" />,
  },
  {
    name: "File Explorer",
    running: true,
    icon: (
      <>
        <path d="M2 2h5l1 1.500h6V13H2z" fill="#f3d98b" />
        <path d="M3 14V8h10v6h-2.500v-3h-5v3z" fill="#45a9dc" />
      </>
    ),
  },
  {
    name: "Store",
    icon: (
      <>
        <path d="M5.500 4V2h5v2" stroke="#fff" />
        <path d="M1.500 4h13v10h-13z" fill="#f4f4f4" />
        <path d="M5 6h2.500v2.500H5z" fill="#e0503a" />
        <path d="M8.500 6H11v2.500H8.500z" fill="#6aa53a" />
        <path d="M5 9.500h2.500V12H5z" fill="#3a86d0" />
        <path d="M8.500 9.500H11V12H8.500z" fill="#e8b030" />
      </>
    ),
  },
  {
    name: "Sticky Notes",
    icon: (
      <>
        <path d="M3 3h10.500v10.500H3z" fill="#f6e021" />
        <path d="M8 8h3.500v3.500z" fill="#333" />
      </>
    ),
  },
  {
    name: "Mail",
    icon: (
      <>
        <path d="M1.500 6L8 2l6.500 4v7.500h-13z" fill="#fff" />
        <path d="M2.500 6.500h11L8 10z" fill="#18222c" />
      </>
    ),
  },
  { name: "Feather", icon: <path d="M2 14.500C3 8 8 3 14 2c-.5 5-4 9-10 10.500z" fill="#a98ac8" stroke="#7d5aa5" strokeWidth="0.500" /> },
  {
    name: "Browser",
    icon: (
      <>
        <circle cx="8" cy="8" r="6.500" fill="#1f5c96" />
        <path d="M2 9c3 3 8 1 12-2 0 9-10 10-12 2z" fill="#48c7cf" />
        <path d="M7 3c3-1 5 0 6 2-2 0-4 0-6-2z" fill="#eef" />
      </>
    ),
  },
  {
    name: "Drive tool",
    icon: (
      <>
        <path d="M5 1.500h6v3l1 1v9H4v-9l1-1z" fill="#a8cbe6" />
        <circle cx="8" cy="10.500" r="2.500" stroke="#24506e" />
        <path d="M5 4.500h6M8 6v2" stroke="#24506e" />
      </>
    ),
  },
  {
    name: "CCleaner",
    icon: (
      <>
        <path d="M13 4C9 0 3 4 4 9s6 6 9 3" stroke="#c33a2c" strokeWidth="3" />
        <path d="M1 10l6-2 2 4-4 3z" fill="#dfe6ea" />
      </>
    ),
  },
  {
    name: "Settings tool",
    icon: (
      <>
        <path d="M1.500 1.500h13v13h-13z" fill="#b7d9e6" />
        <circle cx="8" cy="8" r="4" stroke="#2f7f9c" strokeWidth="2" strokeDasharray="2 1" />
      </>
    ),
  },
  {
    name: "Recorder",
    icon: (
      <>
        <path d="M5 4l9-1v6l-8 1z" fill="#aeb6c2" />
        <path d="M2 5l4 3-2 3M2 13l4-3" stroke="#d8cfae" strokeWidth="1.500" />
      </>
    ),
  },
  {
    name: "NordVPN",
    running: true,
    icon: (
      <>
        <circle cx="8" cy="8" r="6.500" fill="#2b6fb5" />
        <path d="M3 13l5-8 5 8-3-3-2 1-2-1z" fill="#fff" />
      </>
    ),
  },
  {
    name: "Revit",
    running: true,
    active: true,
    icon: (
      <>
        <path d="M1.500 1.500h13v13h-13z" fill="#dce8f3" />
        <path d="M4.500 3h4c5 0 4.500 6 1.500 6.500l2.500 3.500H9.500L7.500 10v3h-3zM7.500 5.500v2c2.500.3 2.500-2.200 0-2z" fill="#1f61a5" />
      </>
    ),
  },
  {
    name: "Download Manager",
    running: true,
    icon: (
      <>
        <circle cx="10" cy="6.500" r="4.500" fill="#8fb0dc" />
        <path d="M2 9c4-5 7-2 9-5-1 4 2 5 1 8-3 2-7 2-10-3z" fill="#4c9c3c" />
        <path d="M7 9l4 1-3 2z" fill="#f0d040" />
      </>
    ),
  },
  {
    name: "Camtasia",
    running: true,
    icon: (
      <>
        <path d="M2 2h12v12H2z" fill="#5ba32b" />
        <path d="M11 5H5.500v6H11" stroke="#fff" strokeWidth="2" />
      </>
    ),
  },
  {
    name: "Camtasia Recorder",
    running: true,
    icon: (
      <>
        <path d="M2 2h12v12H2z" fill="#df4f45" />
        <path d="M11 5H5.500v6H11" stroke="#fff" strokeWidth="2" />
      </>
    ),
  },
]

const CLOUD = "M3.500 12.500c-3.500 0-3.500-4 0-4.500.5-4.500 6-5 7.500-1.500 4-.5 4.500 6 .5 6z"

const TRAY: { name: string; icon: ReactNode }[] = [
  {
    name: "Hidden icons",
    icon: <path d="M3 10l5-5 5 5" stroke="#fff" />,
  },
  { name: "OneDrive", icon: <path d="M1 10c1-2 2-2 3-2 1-4 6-5 8-1 3 0 3.500 5 0 5H3c-1.500 0-2-1-2-2z" fill="#fff" /> },
  {
    name: "Cloud sync",
    icon: (
      <>
        <path d={CLOUD} fill="#fff" />
        <path d="M8 11.500V8M6 9.500L8 7.500l2 2" stroke="#18222c" />
      </>
    ),
  },
  {
    name: "Cloud upload",
    icon: (
      <>
        <path d={CLOUD} fill="#fff" />
        <path d="M8 11.500V8M6 9.500L8 7.500l2 2" stroke="#18222c" />
      </>
    ),
  },
  { name: "Dropbox", icon: <path d="M5 3l3 2-3 2-3-2zM11 3l3 2-3 2-3-2zM5 7l3 2-3 2-3-2zM11 7l3 2-3 2-3-2zM8 10.500l3 2-3 1.500-3-1.500z" fill="#fff" /> },
  { name: "Network", icon: <path d="M5.500 3.500h9v7h-9zM10 10.500v3M6.500 13.500h6M1.500 2.500h3v3h-3zM3 5.500v6h2.500" stroke="#fff" /> },
  { name: "Volume", icon: <path d="M2 6.500h2l3-3v9l-3-3H2zM9 6c1 1 1 3 0 4M11 4.500c2 2 2 5 0 7M13 3c2.500 3 2.500 7 0 10" stroke="#fff" /> },
]

function Taskbar() {
  return (
    <footer className="flex h-6 shrink-0 items-center bg-gradient-to-r from-[#061821] via-[#191b22] to-[#0d202e] text-white">
      <div className="flex h-full w-[592px] shrink-0">
        {APPS.map((a) => (
          <button
            key={a.name}
            aria-label={a.name}
            className={`flex flex-1 flex-col items-center justify-between pt-1 ${a.active ? "bg-[#474c53]" : ""}`}
          >
            <svg width="16" height="16" viewBox="0 0 16 16" fill="none">
              {a.icon}
            </svg>
            <span className={`h-[2px] ${a.running ? "bg-[#78b5e4]" : ""} ${a.active ? "w-full" : "w-[23px]"}`} />
          </button>
        ))}
      </div>
      <div className="ml-auto flex h-full items-center">
        <button aria-label="People" className="mr-[6px]">
          <svg width="16" height="16" viewBox="0 0 16 16" fill="none" stroke="#fff">
            <circle cx="5.500" cy="8" r="2" />
            <path d="M2 14c0-5 7-5 7 0" />
            <circle cx="10.500" cy="4" r="2" />
            <path d="M9 7.500c3-1.500 5 0 5 3" />
          </svg>
        </button>
        {TRAY.map((t) => (
          <button key={t.name} aria-label={t.name} className="flex w-[19px] justify-center">
            <svg width="15" height="15" viewBox="0 0 16 16" fill="none">
              {t.icon}
            </svg>
          </button>
        ))}
        <time className="ml-[6px] w-[53px] text-[9px] whitespace-nowrap">10:27 AM</time>
        <button aria-label="Notifications" className="mr-4">
          <svg width="15" height="16" viewBox="0 0 15 16" fill="none">
            <path d="M1 2h13v10H9.500L7.500 14.500 5.500 12H1z" fill="#fff" />
            <path d="M3.500 5h8M3.500 7h8M3.500 9h5" stroke="#18222c" />
          </svg>
        </button>
        <span className="mr-[2px] h-full w-px bg-[#4b5660]" />
      </div>
    </footer>
  )
}

export default function App() {
  return (
    <div className="relative flex h-screen flex-col overflow-hidden bg-white font-['Open_Sans','Noto_Sans',sans-serif]">
      <TitleBar />
      <RibbonTabs />
      <Ribbon />
      <div className="flex h-[22px] items-center border-b-2 border-[#cbd6bd] bg-[#e3edd7] pt-px pl-[6px] text-[9px] text-[#333]">
        Modify | Place Label
      </div>
      <div className="flex min-h-0 flex-1">
        <PropertiesPalette />
        <DrawingArea />
        <ProjectBrowser />
      </div>
      <StatusBar />
      <Taskbar />
      <Watermark />
    </div>
  )
}
